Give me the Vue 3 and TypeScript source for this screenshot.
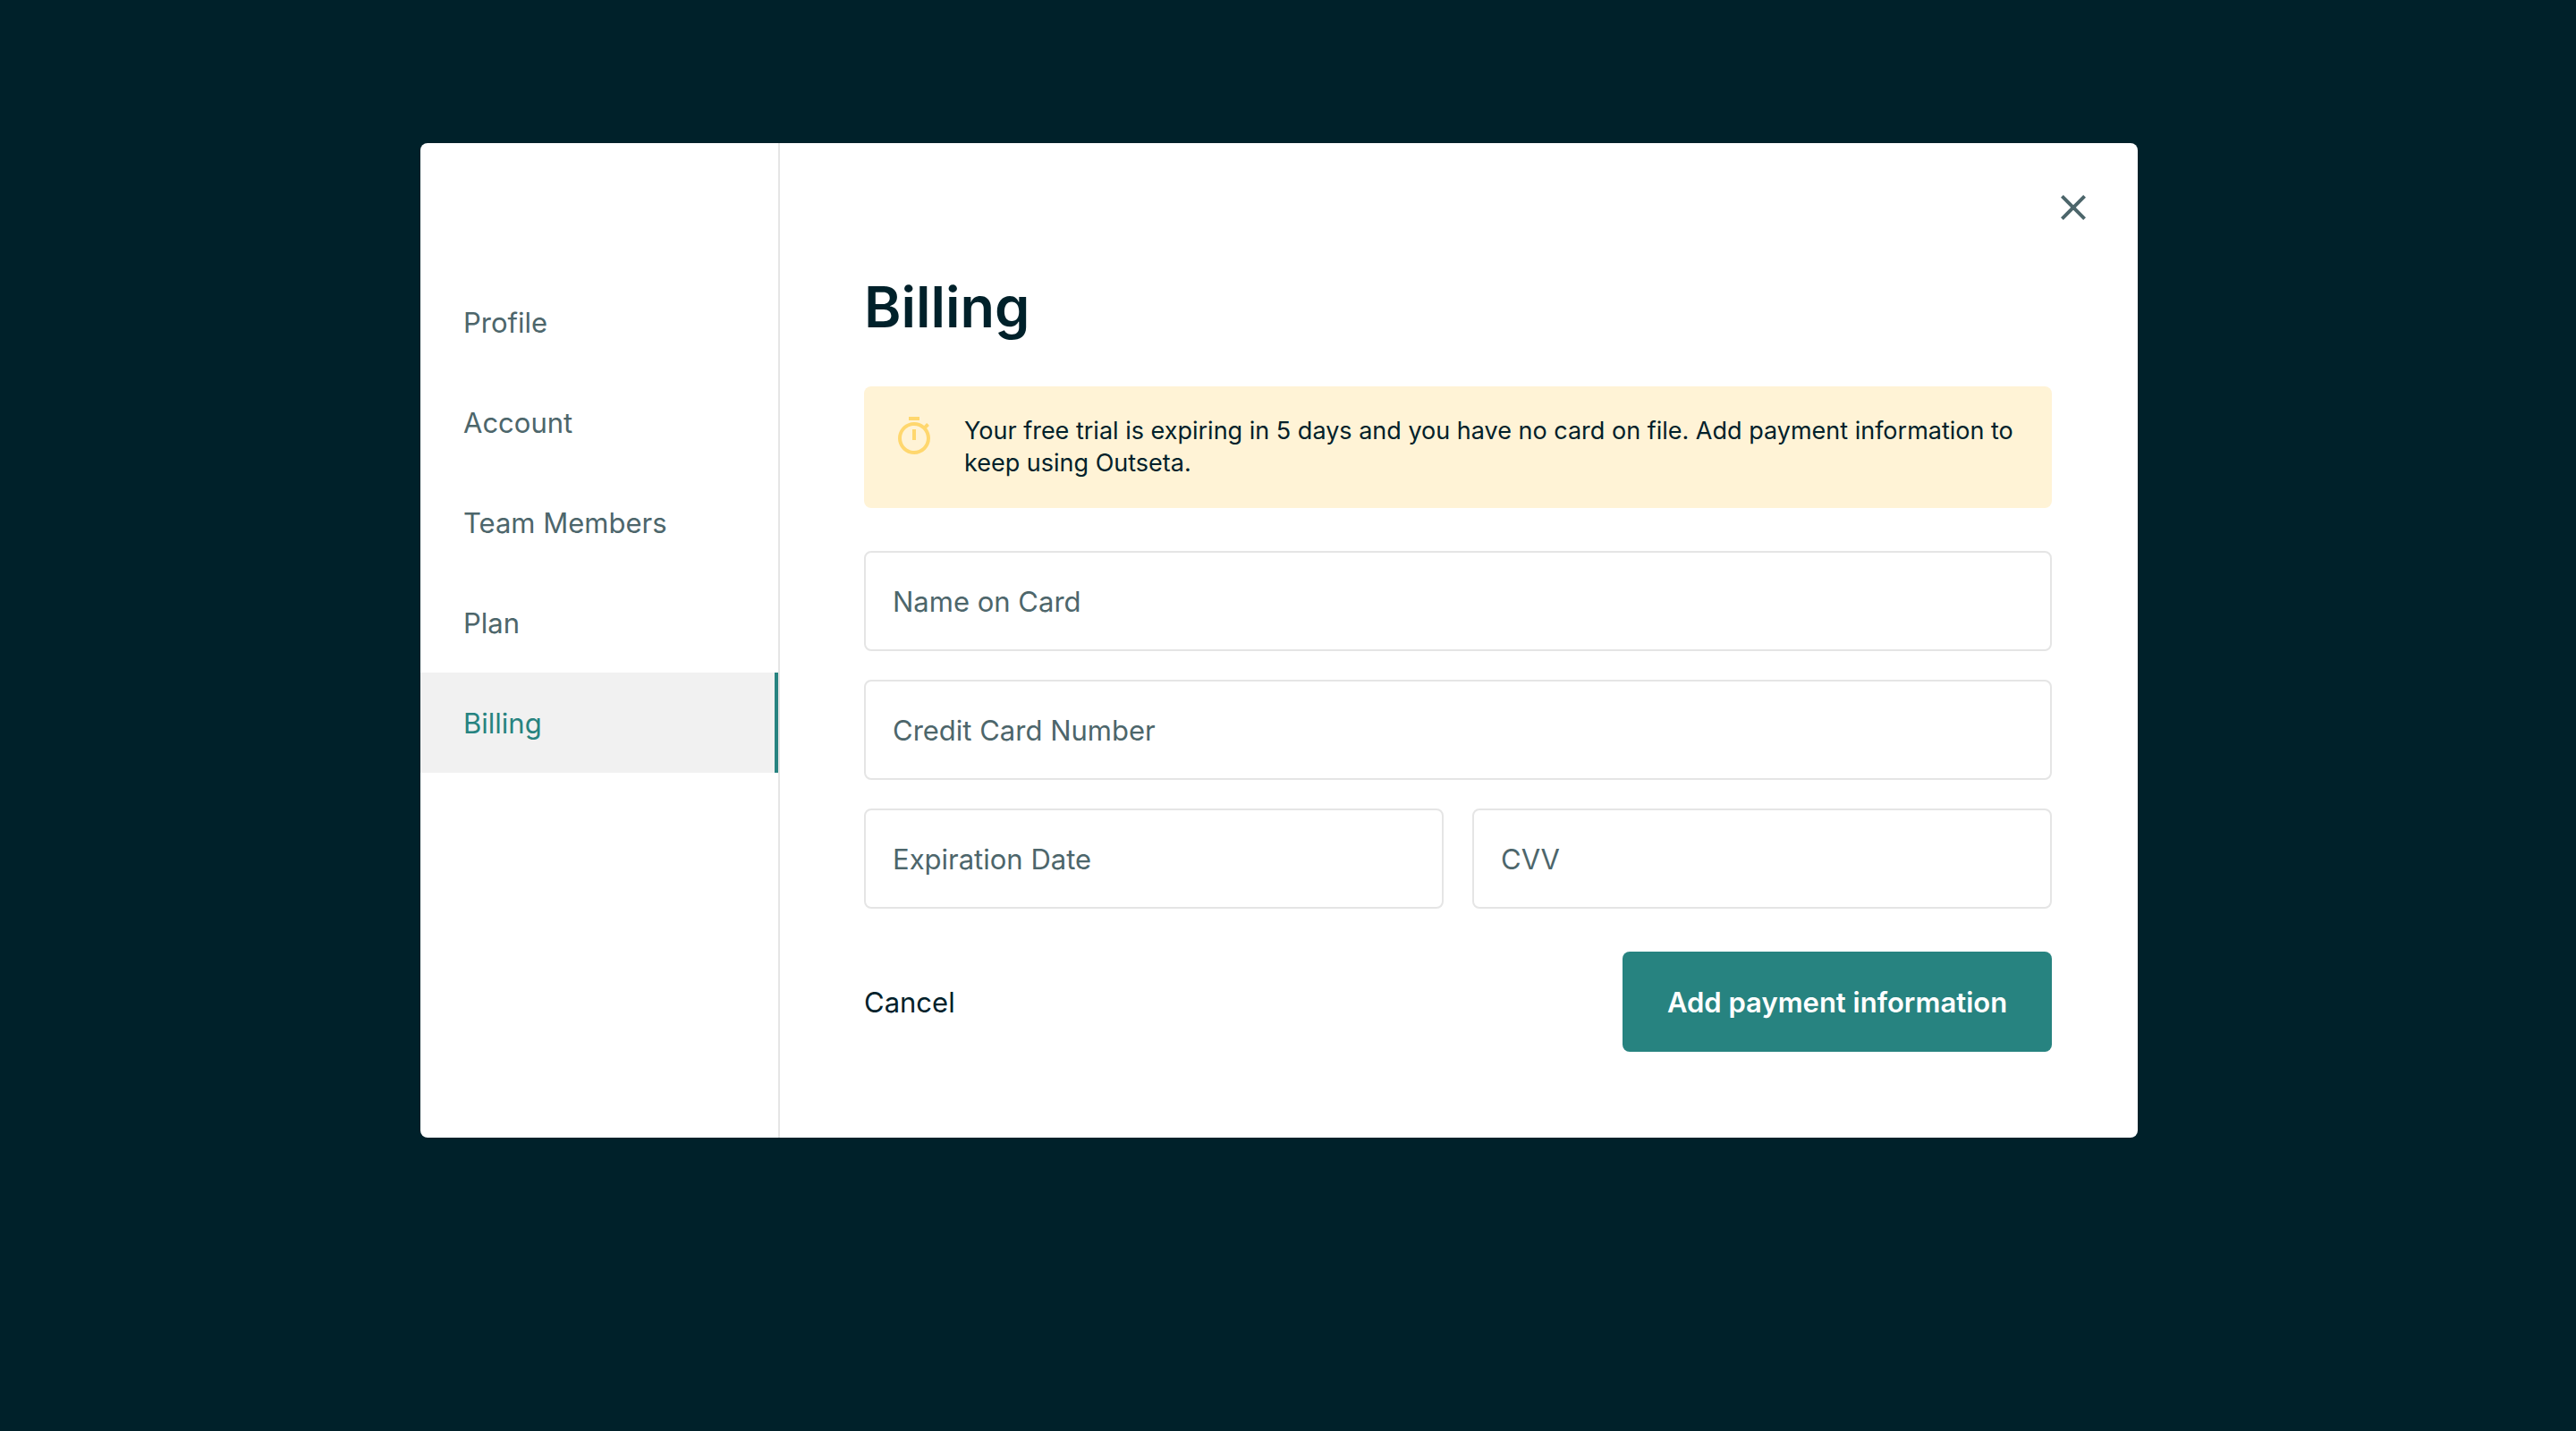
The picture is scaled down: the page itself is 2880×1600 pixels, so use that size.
<script setup lang="ts">
import { reactive, ref } from 'vue'

interface Section {
  id: string
  label: string
}

const sections: Section[] = [
  { id: 'profile', label: 'Profile' },
  { id: 'account', label: 'Account' },
  { id: 'team-members', label: 'Team Members' },
  { id: 'plan', label: 'Plan' },
  { id: 'billing', label: 'Billing' },
]

const current = ref('billing')

const card = reactive({ name: '', number: '', expiration: '', cvv: '' })
</script>

<template>
  <div class="page">
    <div class="modal" role="dialog" aria-labelledby="modal-title">
      <nav class="sidebar" aria-label="Account settings">
        <a
          v-for="section in sections"
          :key="section.id"
          :href="`#${section.id}`"
          class="nav-link"
          :class="{ active: section.id === current }"
          :aria-current="section.id === current ? 'page' : undefined"
          @click.prevent="current = section.id"
        >{{ section.label }}</a>
      </nav>

      <main class="content">
        <button class="close" type="button" aria-label="Close">
          <svg class="icon" viewBox="0 0 24 24" aria-hidden="true">
            <path d="M19 6.41 17.59 5 12 10.59 6.41 5 5 6.41 10.59 12 5 17.59 6.41 19 12 13.41 17.59 19 19 17.59 13.41 12z" />
          </svg>
        </button>

        <h1 id="modal-title" class="title">Billing</h1>

        <div class="notice" role="status">
          <svg class="icon notice-icon" viewBox="0 0 24 24" aria-hidden="true">
            <path d="M15 1H9v2h6V1zm-4 13h2V8h-2v6zm8.03-6.61 1.42-1.42c-.43-.51-.9-.99-1.41-1.41l-1.42 1.42C16.07 4.74 14.12 4 12 4c-4.97 0-9 4.03-9 9s4.02 9 9 9 9-4.03 9-9c0-2.12-.74-4.07-1.97-5.61zM12 20c-3.87 0-7-3.13-7-7s3.13-7 7-7 7 3.13 7 7-3.13 7-7 7z" />
          </svg>
          <p class="notice-text">
            Your free trial is expiring in 5 days and you have no card on file. Add payment information to keep using Outseta.
          </p>
        </div>

        <form class="form" @submit.prevent>
          <input v-model="card.name" class="field" type="text" placeholder="Name on Card" aria-label="Name on Card" autocomplete="cc-name" />
          <input v-model="card.number" class="field" type="text" placeholder="Credit Card Number" aria-label="Credit Card Number" autocomplete="cc-number" />
          <div class="field-row">
            <input v-model="card.expiration" class="field" type="text" placeholder="Expiration Date" aria-label="Expiration Date" autocomplete="cc-exp" />
            <input v-model="card.cvv" class="field" type="text" placeholder="CVV" aria-label="CVV" autocomplete="cc-csc" />
          </div>
          <div class="actions">
            <button class="cancel" type="button">Cancel</button>
            <button class="submit" type="submit">Add payment information</button>
          </div>
        </form>
      </main>
    </div>
  </div>
</template>

<style>
body {
  margin: 0;
  background: #00212a;
}
</style>

<style scoped>
.page {
  box-sizing: border-box;
  min-height: 100vh;
  padding: 160px 20px 160px 0;
  background: #00212a;
  color: #00212a;
  font-family: Inter, "Liberation Sans", sans-serif;
  font-size: 31px;
  line-height: 40px;
}

.modal {
  display: flex;
  max-width: 1920px;
  margin: 0 auto;
  overflow: hidden;
  border-radius: 8px;
  background: #fff;
}

.sidebar {
  display: flex;
  flex: 0 0 400px;
  flex-direction: column;
  padding-top: 144px;
}

.nav-link {
  padding: 37px 44px 35px 48px;
  border-right: 4px solid transparent;
  color: #4d666b;
  text-decoration: none;
}

.nav-link.active {
  border-right-color: #278380;
  background: #f1f1f1;
  color: #278380;
}

.content {
  position: relative;
  flex: 1;
  min-width: 0;
  padding: 144px 96px 96px 94px;
  border-left: 2px solid #e5e5e5;
}

button,
input {
  box-sizing: border-box;
  margin: 0;
  font: inherit;
}

button {
  padding: 0;
  border: 0;
  background: none;
  color: inherit;
  cursor: pointer;
}

.icon {
  display: block;
  flex: none;
  width: 48px;
  height: 48px;
  fill: currentColor;
}

.close {
  position: absolute;
  top: 48px;
  right: 48px;
  color: #4d666b;
}

.title {
  margin: 0 0 50px;
  font-size: 63px;
  font-weight: 600;
  line-height: 78px;
}

.notice {
  display: flex;
  gap: 32px;
  padding: 32px;
  border-radius: 8px;
  background: #fff3d6;
}

.notice-icon {
  color: #ffd76e;
}

.notice-text {
  margin: 0;
  font-size: 27px;
  line-height: 36px;
}

.form {
  display: flex;
  flex-direction: column;
  gap: 32px;
  margin-top: 48px;
}

.field {
  width: 100%;
  height: 112px;
  padding: 0 30px;
  border: 2px solid #e5e5e5;
  border-radius: 8px;
  background: #fff;
  color: #00212a;
}

.field::placeholder {
  color: #4d666b;
  opacity: 1;
}

.field-row {
  display: flex;
  gap: 32px;
}

.actions {
  display: flex;
  align-items: center;
  justify-content: space-between;
  margin-top: 16px;
}

.cancel,
.submit {
  padding: 37px 0 35px;
}

.submit {
  min-width: 480px;
  border-radius: 8px;
  background: #278380;
  color: #fff;
  font-weight: 600;
}
</style>
